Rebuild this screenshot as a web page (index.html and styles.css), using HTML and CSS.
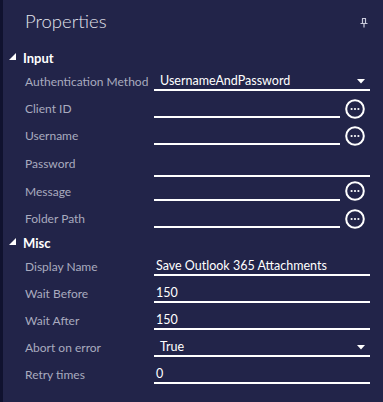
FILE: index.html
```html
<!DOCTYPE html>
<html>
<head>
<meta charset="utf-8">
<link rel="stylesheet" href="styles.css">
</head>
<body>
<div class="panel">
  <div class="header">
    <div class="title">Properties</div>
    <svg class="pin" width="8" height="11" viewBox="0 0 8 11"><path d="M0.5 6.5H7.5M2 1.5H6M2.5 1.5V6.5M5.5 1.5V6.5M4 6.5V10.5" stroke="#c9cadb" stroke-width="1.2" fill="none"/></svg>
  </div>

  <div class="section">
    <svg class="tri" width="7" height="7" viewBox="0 0 7 7"><polygon points="7,0 7,7 0,7" fill="#ffffff"/></svg>
    <span class="section-title">Input</span>
  </div>
  <div class="row">
    <div class="label">Authentication Method</div>
    <div class="field select"><span class="value sel">UsernameAndPassword</span><svg class="caret" width="8" height="5" viewBox="0 0 8 5"><polygon points="0,0 8,0 4,4.5" fill="#fff"/></svg></div>
  </div>
  <div class="row">
    <div class="label">Client ID</div>
    <div class="field short"></div>
    <svg class="more" width="20" height="20" viewBox="0 0 20 20"><circle cx="10" cy="10" r="8.8" stroke="#fff" stroke-width="2" fill="none"/><circle cx="6.6" cy="10" r="1.1" fill="#fff"/><circle cx="10" cy="10" r="1.1" fill="#fff"/><circle cx="13.4" cy="10" r="1.1" fill="#fff"/></svg>
  </div>
  <div class="row">
    <div class="label">Username</div>
    <div class="field short"></div>
    <svg class="more" width="20" height="20" viewBox="0 0 20 20"><circle cx="10" cy="10" r="8.8" stroke="#fff" stroke-width="2" fill="none"/><circle cx="6.6" cy="10" r="1.1" fill="#fff"/><circle cx="10" cy="10" r="1.1" fill="#fff"/><circle cx="13.4" cy="10" r="1.1" fill="#fff"/></svg>
  </div>
  <div class="row tall">
    <div class="label">Password</div>
    <div class="field pw"></div>
  </div>
  <div class="row tall">
    <div class="label">Message</div>
    <div class="field short"></div>
    <svg class="more" width="20" height="20" viewBox="0 0 20 20"><circle cx="10" cy="10" r="8.8" stroke="#fff" stroke-width="2" fill="none"/><circle cx="6.6" cy="10" r="1.1" fill="#fff"/><circle cx="10" cy="10" r="1.1" fill="#fff"/><circle cx="13.4" cy="10" r="1.1" fill="#fff"/></svg>
  </div>
  <div class="row">
    <div class="label">Folder Path</div>
    <div class="field short"></div>
    <svg class="more" width="20" height="20" viewBox="0 0 20 20"><circle cx="10" cy="10" r="8.8" stroke="#fff" stroke-width="2" fill="none"/><circle cx="6.6" cy="10" r="1.1" fill="#fff"/><circle cx="10" cy="10" r="1.1" fill="#fff"/><circle cx="13.4" cy="10" r="1.1" fill="#fff"/></svg>
  </div>

  <div class="section misc">
    <svg class="tri" width="7" height="7" viewBox="0 0 7 7"><polygon points="7,0 7,7 0,7" fill="#ffffff"/></svg>
    <span class="section-title">Misc</span>
  </div>
  <div class="row">
    <div class="label">Display Name</div>
    <div class="field"><span class="value">Save Outlook 365 Attachments</span></div>
  </div>
  <div class="row">
    <div class="label">Wait Before</div>
    <div class="field"><span class="value">150</span></div>
  </div>
  <div class="row">
    <div class="label">Wait After</div>
    <div class="field"><span class="value">150</span></div>
  </div>
  <div class="row">
    <div class="label">Abort on error</div>
    <div class="field select"><span class="value sel">True</span><svg class="caret" width="8" height="5" viewBox="0 0 8 5"><polygon points="0,0 8,0 4,4.5" fill="#fff"/></svg></div>
  </div>
  <div class="row">
    <div class="label">Retry times</div>
    <div class="field"><span class="value">0</span></div>
  </div>
</div>
</body>
</html>
```

FILE: styles.css
```css
html, body {
  margin: 0;
  padding: 0;
  background: #222449;
}
body {
  width: 383px;
  height: 402px;
  overflow: hidden;
  font-family: "Lato", "Noto Sans", sans-serif;
}
.panel {
  box-sizing: border-box;
  height: 402px;
  border-left: 3px solid #10122f;
  background: #222449;
}
.header {
  height: 48px;
  display: flex;
  align-items: flex-start;
  justify-content: space-between;
  padding: 0 15px 0 22px;
}
.title {
  margin-top: 9px;
  font-size: 18.5px;
  font-weight: 300;
  color: #e2e3ec;
  line-height: 24px;
}
.pin {
  margin-top: 17px;
}
.section {
  height: 20px;
  display: flex;
  align-items: center;
  padding-left: 6px;
}
.section.misc {
  height: 21px;
}
.tri {
  margin-right: 7px;
  margin-top: -3px;
}
.section-title {
  color: #ffffff;
  font-weight: 700;
  font-size: 13px;
}
.row {
  height: 27px;
  display: flex;
  align-items: center;
  padding-left: 22px;
}
.row.tall {
  height: 28px;
}
.label {
  width: 129px;
  flex: none;
  color: #a9abbf;
  font-size: 12px;
  white-space: nowrap;
}
.field {
  box-sizing: border-box;
  width: 216px;
  height: 18px;
  margin-top: 1px;
  border-bottom: 2px solid #ffffff;
  display: flex;
  align-items: center;
  justify-content: space-between;
}
.field.short {
  width: 186px;
}
.field.pw {
  height: 22px;
  margin-top: 5px;
}
.value {
  color: #ffffff;
  font-size: 12.5px;
  padding-left: 2px;
  line-height: 16px;
}
.value.sel {
  padding-left: 6px;
}
.caret {
  margin-right: 5px;
}
.more {
  margin-left: 5px;
  flex: none;
}
```
